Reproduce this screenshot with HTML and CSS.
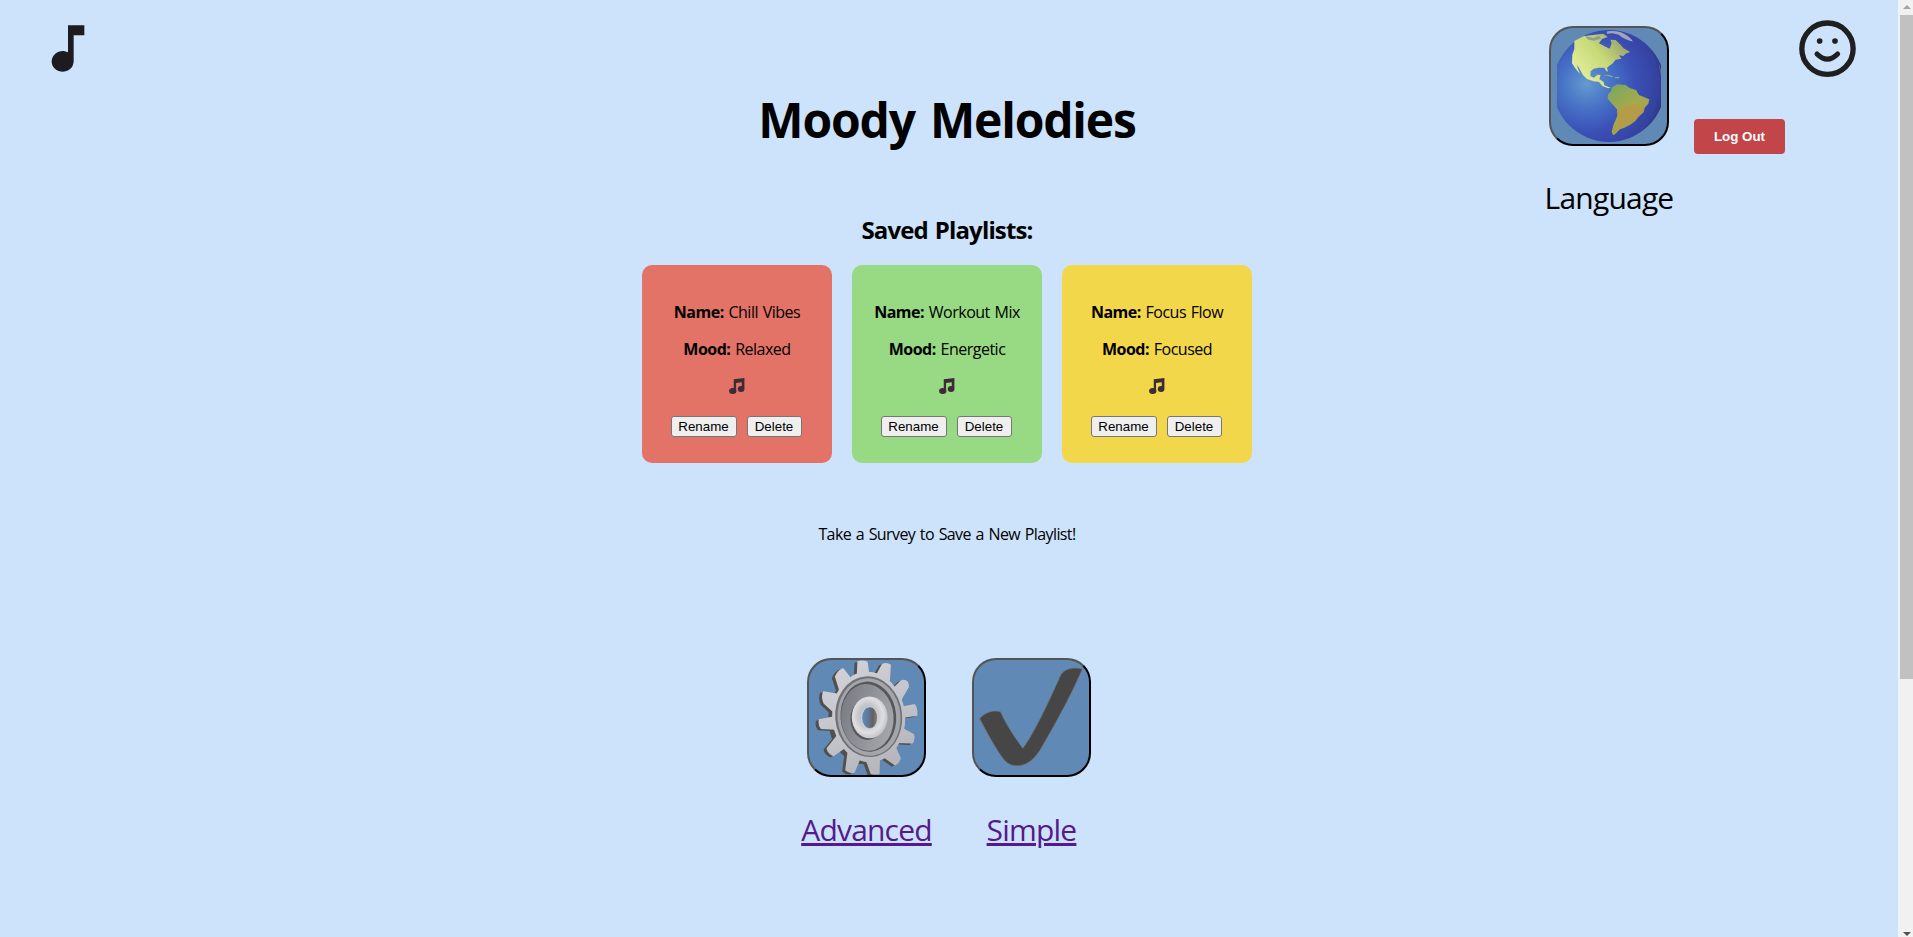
FILE: index.html
```html
<!DOCTYPE html>
<html lang="en">
<head>
<meta charset="utf-8">
<title>Moody Melodies</title>
<link rel="stylesheet" href="styles.css">
</head>
<body>
<div class="page">
  <aside class="side-left">
    <svg class="logo" viewBox="60 70 108 150"><path d="M114 77H163V107H131V185A33 31 0 1 1 114 158Z" fill="#1d1b20"/></svg>
  </aside>

  <main class="main">
    <h1 class="title">Moody Melodies</h1>
    <h2 class="subtitle">Saved Playlists:</h2>
    <section class="cards">
      <article class="card red">
        <p class="line"><b>Name:</b> Chill Vibes</p>
        <p class="line"><b>Mood:</b> Relaxed</p>
        <svg class="notes" viewBox="0 0 46 48"><use href="#notes"/></svg>
        <div class="actions"><button class="btn rename">Rename</button><button class="btn delete">Delete</button></div>
      </article>
      <article class="card green">
        <p class="line"><b>Name:</b> Workout Mix</p>
        <p class="line"><b>Mood:</b> Energetic</p>
        <svg class="notes" viewBox="0 0 46 48"><use href="#notes"/></svg>
        <div class="actions"><button class="btn rename">Rename</button><button class="btn delete">Delete</button></div>
      </article>
      <article class="card yellow">
        <p class="line"><b>Name:</b> Focus Flow</p>
        <p class="line"><b>Mood:</b> Focused</p>
        <svg class="notes" viewBox="0 0 46 48"><use href="#notes"/></svg>
        <div class="actions"><button class="btn rename">Rename</button><button class="btn delete">Delete</button></div>
      </article>
    </section>
    <p class="survey">Take a Survey to Save a New Playlist!</p>
    <nav class="choices">
      <div class="choice">
        <button class="tile" aria-label="Advanced">
          <svg viewBox="57 59 348 348">
            <defs>
              <linearGradient id="metal" gradientUnits="userSpaceOnUse" x1="130" y1="70" x2="330" y2="400"><stop offset="0" stop-color="#d2d2d8"/><stop offset=".5" stop-color="#c4c5cb"/><stop offset="1" stop-color="#b2b2b7"/></linearGradient>
              <linearGradient id="dish" x1="0" y1="0" x2="1" y2=".5"><stop offset="0" stop-color="#74777c"/><stop offset=".5" stop-color="#8b8e94"/><stop offset="1" stop-color="#a2a4aa"/></linearGradient>
              <radialGradient id="hub" cx=".45" cy=".45" r=".6"><stop offset=".4" stop-color="#c2c3c8"/><stop offset=".7" stop-color="#dedee3"/><stop offset="1" stop-color="#bcbcc2"/></radialGradient>
              <linearGradient id="hole" x1="0" y1="0" x2="1" y2="0"><stop offset="0" stop-color="#6089b6"/><stop offset=".35" stop-color="#5d7da2"/><stop offset=".7" stop-color="#64605f"/><stop offset="1" stop-color="#8a8582"/></linearGradient>
              <path id="teeth" d="M203 63Q219 58 234 64L240 110H201ZM277 71Q291 64 304 73L301 122L256 110ZM332 122Q345 114 354 123Q360 132 358 141L333 184L303 151ZM334 200L376 192Q385 201 384 227L341 233ZM341 265L374 283Q378 298 370 311L322 309ZM316 314L334 355Q331 370 316 377L282 353ZM271 350L270 402Q257 407 243 403L225 352ZM216 347L195 398Q180 405 166 391L174 330ZM168 324L131 349Q112 341 110 325L143 284ZM137 269L93 267Q83 256 87 238L137 228ZM129 216L101 190Q92 170 100 153L142 160ZM149 154L135 109Q144 88 160 83L190 121Z"/>
            </defs>
            <g fill="#51504e"><use href="#teeth" x="-9" y="4"/><ellipse cx="227" cy="236" rx="112" ry="138"/></g>
            <g fill="url(#metal)"><use href="#teeth"/><ellipse cx="237" cy="231" rx="110" ry="137" transform="rotate(-5 237 231)"/></g>
            <ellipse cx="237" cy="230" rx="101" ry="122" fill="#707277" transform="rotate(-5 237 230)"/>
            <ellipse cx="238" cy="231" rx="95" ry="117" fill="#a3a5aa" transform="rotate(-5 238 231)"/>
            <ellipse cx="236" cy="230" rx="84" ry="106" fill="#56575c" transform="rotate(-5 236 230)"/>
            <ellipse cx="233" cy="232" rx="79" ry="101" fill="url(#dish)" transform="rotate(-5 233 232)"/>
            <ellipse cx="233" cy="237" rx="51" ry="63" fill="#55575b"/>
            <ellipse cx="240" cy="232" rx="54" ry="63" fill="url(#hub)"/>
            <ellipse cx="240" cy="233" rx="24" ry="33" fill="url(#hole)" stroke="#e3e3e8" stroke-width="2"/>
          </svg>
        </button>
        <a class="label" href="#">Advanced</a>
      </div>
      <div class="choice">
        <button class="tile" aria-label="Simple">
          <svg viewBox="42 59 348 348"><path d="M59 236C74 216 103 209 122 215Q143 263 189 325Q225 280 300 112C309 84 343 79 369 86Q328 183 240 333C214 371 190 380 165 378C143 375 134 363 118 340Q91 298 59 236Z" fill="#464646" stroke="#777a7e" stroke-width="2"/></svg>
        </button>
        <a class="label" href="#">Simple</a>
      </div>
    </nav>
  </main>

  <aside class="side-right">
    <div class="language">
      <button class="tile globe" aria-label="Language">
        <svg viewBox="93 84 348 348">
          <defs>
            <radialGradient id="sea" cx=".3" cy=".48" r=".78"><stop offset="0" stop-color="#659ace"/><stop offset=".28" stop-color="#4773c7"/><stop offset=".55" stop-color="#3b51b7"/><stop offset=".82" stop-color="#3442a0"/><stop offset="1" stop-color="#242650"/></radialGradient>
            <linearGradient id="north" x1="0" y1=".8" x2="1" y2="0"><stop offset="0" stop-color="#e8f3a2"/><stop offset=".5" stop-color="#c7d978"/><stop offset="1" stop-color="#858d68"/></linearGradient>
            <linearGradient id="south" x1=".2" y1="0" x2=".8" y2="1"><stop offset="0" stop-color="#7ea75f"/><stop offset=".45" stop-color="#a3aa4d"/><stop offset="1" stop-color="#b29547"/></linearGradient>
            <clipPath id="frame"><rect x="111" y="84" width="312" height="348"/></clipPath>
          </defs>
          <g clip-path="url(#frame)">
            <circle cx="267" cy="258" r="168" fill="url(#sea)"/>
            <path d="M163 123L190 109L224 104L250 101L263 111L246 117L237 130L251 137L269 146L275 130L271 119L287 120L300 133L311 145L331 156L317 161L310 168L297 166L304 176L287 179L277 191L266 199L261 204L264 216L257 211L253 203L236 203L221 206L212 214L211 229L222 233L232 224L242 225L238 237L251 246L253 256L266 261L273 263L264 265L247 258L237 246L221 244L201 237L188 224L177 203L170 195L180 222L167 206L156 190L157 164L163 147Z" fill="url(#north)"/>
            <path d="M196 108L220 114L237 107L243 116L221 122L203 118Z" fill="#8f9d92"/>
            <path d="M262 94Q282 91 303 97Q329 108 339 125L323 120L308 113L296 104L278 100L260 101Z" fill="#a0a5ba"/>
            <path d="M248 225L265 224L279 229L276 232L261 227ZM284 231L299 232L297 235L286 235Z" fill="#8fb36b"/>
            <path d="M277 261L292 253L316 255L329 264L348 270L357 285L388 298L385 311L374 323L371 337L355 350L346 363L331 374L313 383L300 388L286 402L279 406L275 395L280 376L292 347L291 328L276 311L263 296L264 283L272 275Z" fill="url(#south)"/>
            <path d="M294 327L328 314L351 315L374 323L365 341L347 360L320 371L294 384Z" fill="#bd9746" opacity=".65"/>
            <path d="M417 190Q423 210 423 230Z" fill="#a39253"/>
          </g>
        </svg>
      </button>
      <span class="label">Language</span>
    </div>
    <button class="logout">Log Out</button>
    <svg class="smile" viewBox="836 60 172 172"><g fill="none" stroke="#1f1f1f"><circle cx="921.5" cy="146" r="77" stroke-width="16"/><path d="M890 162Q921 193 952 162" stroke-width="15" stroke-linecap="round"/></g><g fill="#1f1f1f"><circle cx="898" cy="123" r="8.5"/><circle cx="944" cy="123" r="8.5"/></g></svg>
  </aside>
</div>
<div class="scrollbar"><i class="arrow up"></i><i class="thumb"></i><i class="arrow down"></i></div>
<svg width="0" height="0" class="symbols"><defs><g id="notes" fill="#3b2c36"><path d="M14 4L46 0V31H38V13L21 15V39H14Z"/><ellipse cx="11" cy="39" rx="11" ry="9"/><ellipse cx="36" cy="33" rx="10" ry="9"/></g></defs></svg>
</body>
</html>
```

FILE: styles.css
```css
* { box-sizing: border-box; }
body {
  margin: 0;
  height: 937px;
  display: flex;
  overflow: hidden;
  background: #cde3fb;
  color: #000;
  font-family: "Open Sans", "Noto Sans", sans-serif;
  font-size: 16px;
}
svg { display: block; }
.symbols { display: none; }
.page {
  width: 1898px;
  display: grid;
  grid-template-columns: 642px 610px 1fr;
}
.side-left { padding: 23px 0 0 50px; }
.logo { width: 36px; height: 50px; }

.main { display: flex; flex-direction: column; align-items: center; padding-top: 88px; white-space: nowrap; }
.title { margin: 0; font-size: 48px; line-height: 64px; font-weight: 700; letter-spacing: -1.2px; word-spacing: 4px; }
.subtitle { margin: 62px 0 0; font-size: 24px; line-height: 32px; font-weight: 700; letter-spacing: -0.85px; word-spacing: 1.5px; }
.cards { display: flex; gap: 20px; margin-top: 18.5px; }
.card {
  width: 190px;
  height: 198px;
  padding-top: 37px;
  border-radius: 10px;
  display: flex;
  flex-direction: column;
  align-items: center;
}
.red { background: #e27366; }
.green { background: #98da83; }
.yellow { background: #f2d74b; }
.line { margin: 0 0 16px; line-height: 21px; letter-spacing: -0.5px; word-spacing: 1.1px; }
.notes { width: 15.5px; height: 16px; margin-top: 2.7px; }
.actions { display: flex; gap: 10px; margin: 22.3px 2px 0 0; }
.btn {
  height: 21px;
  padding: 0;
  border: 1px solid #767676;
  border-radius: 3px;
  background: #efefef;
  color: #000;
  font: 13.333px "Liberation Sans", Arial, sans-serif;
}
.rename { width: 66px; }
.delete { width: 55px; }
.survey { margin: 61.5px 0 0; line-height: 21px; letter-spacing: -0.6px; word-spacing: 1.1px; }
.choices { display: flex; gap: 34px; margin: 112.8px 0 0 4px; }
.choice { display: flex; flex-direction: column; align-items: center; width: 131px; }
.tile {
  width: 119.4px;
  height: 119.4px;
  padding: 0;
  border: 2px outset #000;
  border-radius: 24px;
  background: #6089b6;
  overflow: hidden;
}
.tile svg { width: 100%; height: 100%; }
.label { margin-top: 33px; font-size: 30px; line-height: 40px; letter-spacing: -0.8px; color: #000; }
a.label {
  color: #551a8b;
  text-decoration-line: underline;
  text-decoration-thickness: 3px;
  text-underline-offset: 2px;
}

.side-right { display: flex; align-items: flex-start; padding-left: 293px; }
.language { width: 128px; padding-top: 26px; display: flex; flex-direction: column; align-items: center; }
.globe { width: 120px; height: 120px; }
.language .label { margin-top: 32px; }
.logout {
  width: 91px;
  height: 35px;
  margin: 119px 0 0 21px;
  padding: 0;
  border: 0;
  border-radius: 4px;
  background: #c24549;
  color: #fff;
  font: bold 13.333px "Liberation Sans", Arial, sans-serif;
}
.smile { width: 57.3px; height: 57.3px; margin: 20px 0 0 13.6px; }

.scrollbar {
  width: 15px;
  padding-left: 2px;
  background: #f1f1f1;
  display: flex;
  flex-direction: column;
  align-items: center;
}
.arrow { width: 0; height: 0; border: 4px solid transparent; border-top-width: 0; border-bottom-width: 0; }
.up { margin-top: 5px; border-bottom: 4px solid #a3a3a3; }
.down { margin-top: 253px; border-top: 4px solid #505050; }
.thumb { width: 13px; height: 664px; margin-top: 6px; background: #c1c1c1; }
```
